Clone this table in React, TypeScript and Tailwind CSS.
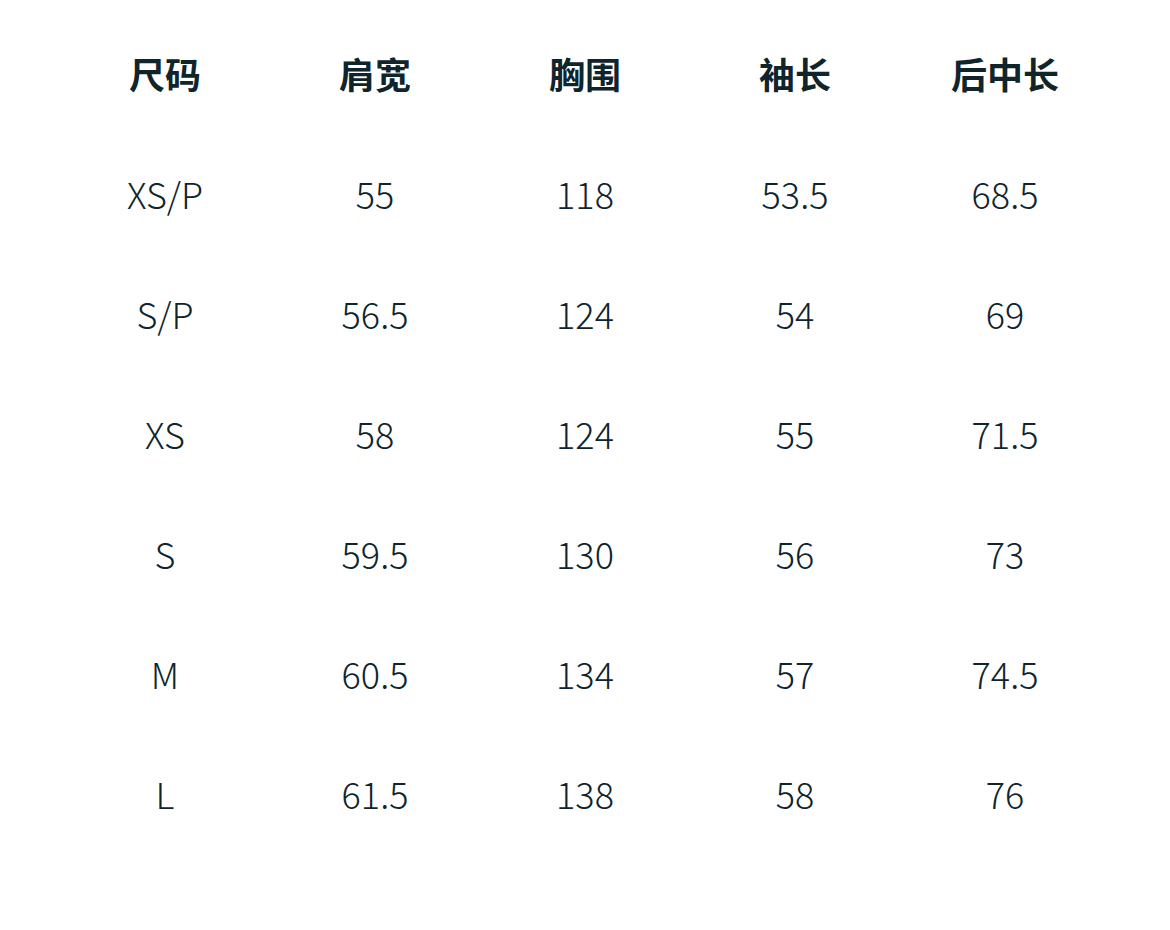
import React from "react";

const headers = ["尺码", "肩宽", "胸围", "袖长", "后中长"];

const rows = [
  ["XS/P", "55", "118", "53.5", "68.5"],
  ["S/P", "56.5", "124", "54", "69"],
  ["XS", "58", "124", "55", "71.5"],
  ["S", "59.5", "130", "56", "73"],
  ["M", "60.5", "134", "57", "74.5"],
  ["L", "61.5", "138", "58", "76"],
];

export default function App() {
  return (
    <div
      className="w-[1170px] h-[930px] bg-white pt-[13px] px-[60px] text-[#0f242b]"
      style={{ fontFamily: '"Noto Sans CJK SC", "Noto Sans", sans-serif' }}
    >
      {/* header */}
      <div className="grid grid-cols-5 h-[120px] items-center">
        {headers.map((h) => (
          <div key={h} className="text-center text-[36px] font-bold leading-none">
            {h}
          </div>
        ))}
      </div>

      {rows.map((row) => (
        <div key={row[0]} className="grid grid-cols-5 h-[120px] items-center">
          {row.map((cell, i) => (
            <div key={i} className="text-center text-[36px] font-extralight leading-none">
              {cell}
            </div>
          ))}
        </div>
      ))}
    </div>
  );
}
